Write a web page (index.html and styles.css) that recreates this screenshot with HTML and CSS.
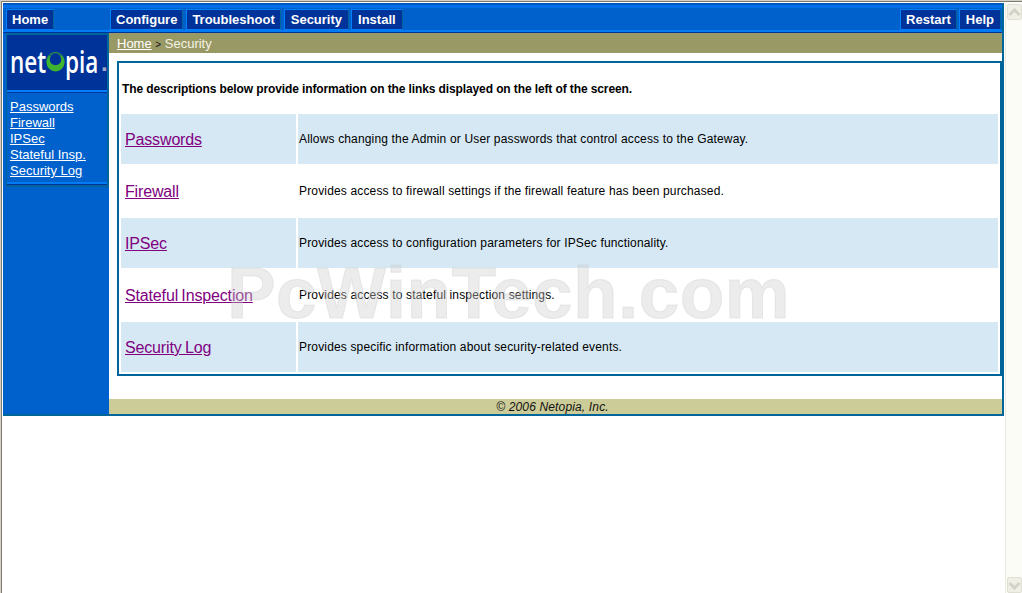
FILE: index.html
```html
<!DOCTYPE html>
<html lang="en">
<head>
<meta charset="utf-8">
<title>Netopia - Security</title>
<link rel="stylesheet" href="styles.css">
</head>
<body>
<div class="window">
  <div class="viewport">
    <div class="page">
      <nav class="topnav">
        <a class="btn btn-home">Home</a>
        <a class="btn">Configure</a>
        <a class="btn">Troubleshoot</a>
        <a class="btn btn-wide btn-tight">Security</a>
        <a class="btn btn-wide">Install</a>
        <a class="btn btn-restart">Restart</a>
        <a class="btn btn-wide">Help</a>
      </nav>
      <div class="columns">
        <aside class="sidebar">
          <div class="sidebox">
            <div class="logo">
              <span class="logo-text logo-net">net</span><svg class="logo-o" width="19" height="22" viewBox="0 0 19 22"><circle cx="9.5" cy="11.5" r="9" fill="#3fb52f"/><circle cx="9.5" cy="8.4" r="5.8" fill="#003399"/><circle cx="9.5" cy="10" r="8.6" fill="none" stroke="#3fb52f" stroke-width="0.8"/></svg><span class="logo-text logo-pia">pia</span><span class="logo-dot">.</span>
            </div>
            <ul class="sidelinks">
              <li><a href="#">Passwords</a></li>
              <li><a href="#">Firewall</a></li>
              <li><a href="#">IPSec</a></li>
              <li><a href="#">Stateful Insp.</a></li>
              <li><a href="#">Security Log</a></li>
            </ul>
          </div>
        </aside>
        <main class="main">
          <div class="crumb"><a href="#">Home</a> <span class="gt">&gt;</span> Security</div>
          <section class="box">
            <p class="intro">The descriptions below provide information on the links displayed on the left of the screen.</p>
            <div class="rows">
              <a class="name odd" href="#">Passwords</a><div class="desc odd">Allows changing the Admin or User passwords that control access to the Gateway.</div>
              <a class="name" href="#">Firewall</a><div class="desc">Provides access to firewall settings if the firewall feature has been purchased.</div>
              <a class="name odd" href="#">IPSec</a><div class="desc odd">Provides access to configuration parameters for IPSec functionality.</div>
              <a class="name" href="#">Stateful Inspection</a><div class="desc">Provides access to stateful inspection settings.</div>
              <a class="name odd" href="#">Security Log</a><div class="desc odd">Provides specific information about security-related events.</div>
            </div>
          </section>
          <footer class="foot">© 2006 Netopia, Inc.</footer>
        </main>
      </div>
      <div class="watermark">PcWinTech.com</div>
    </div>
    <div class="scrollbar">
      <div class="sb-btn"><svg width="13" height="9" viewBox="0 0 13 9"><path d="M1.5 7 L6.5 2 L11.5 7" fill="none" stroke="#d4d2c6" stroke-width="3"/></svg></div>
      <div class="sb-btn"><svg width="13" height="9" viewBox="0 0 13 9"><path d="M1.5 2 L6.5 7 L11.5 2" fill="none" stroke="#d4d2c6" stroke-width="3"/></svg></div>
    </div>
  </div>
</div>
</body>
</html>
```
FILE: styles.css
```css
* { box-sizing: border-box; }
html, body { margin: 0; padding: 0; height: 100%; overflow: hidden; background: #fff; }
body { font-family: "Liberation Sans", Arial, sans-serif; }
.window { height: 593px; border-top: 1px solid #d4d0c8; border-left: 1px solid #d4d0c8; }
.viewport { display: flex; align-items: flex-start; height: 592px; padding: 1px 0 0 1px; border-top: 1px solid #7f7b70; border-left: 1px solid #7f7b70; position: relative; }
.page { position: relative; width: 1001px; height: 413px; flex: none; border-right: 2px solid #006699; border-bottom: 2px solid #006699; background: #0060cc; }

.topnav { display: flex; height: 30px; padding: 6px 0 3px 3px; border-top: 2px solid #0058c0; background: #0060cc; box-shadow: inset 0 -1px 0 #003399, inset 0 -3px 0 #007af5; position: relative; }
.topnav::before { content: ""; position: absolute; left: 0; right: 0; top: 0; height: 3px; background: #0070ea; }
.btn { display: block; position: relative; height: 21px; margin-top: -2px; margin-right: 3px; padding: 0 5px; background: #003399; border: 1px solid #0080ff; border-right-color: #006699; color: #fff; font-size: 13px; font-weight: bold; line-height: 20px; white-space: nowrap; }
.btn-wide { padding: 0 6px; }
.btn-tight { margin-right: 2px; }
.btn-home { width: 48px; margin-right: 56px; }
.btn-restart { margin-left: auto; margin-right: 2px; }
.btn:last-child { margin-right: 1px; }

.columns { display: flex; height: 381px; }
.sidebar { width: 106px; flex: none; padding-left: 3px; background: #0060cc; }
.sidebox { height: 154px; border: 2px solid #006699; border-left-width: 1px; background: #0060cc; display: flex; flex-direction: column; }
.logo { height: 55px; flex: none; display: flex; align-items: flex-start; padding: 12px 0 0 3px; background: #003399; }
.logo-text { display: block; flex: none; font-family: "Open Sans", sans-serif; font-size: 30px; font-weight: 600; line-height: 30px; color: #fff; transform: scaleX(0.75); transform-origin: left top; }
.logo-net { width: 36px; }
.logo-pia { width: 34px; }
.logo-o { margin: 4px 0 0 0; flex: none; }
.logo-dot { font-size: 24px; font-weight: bold; line-height: 31px; color: #a7a9c8; margin-left: 2px; }
.sidelinks { list-style: none; margin: 0; padding: 7px 0 0 3px; flex: 1; border-top: 2px solid #0080ff; box-shadow: inset 0 1px 0 #003399, inset 0 -1px 0 #003399, inset 0 -3px 0 #007af5; }
.sidelinks li { height: 16px; line-height: 16px; font-size: 13px; }
.sidelinks a { color: #fff; }

.main { flex: 1; display: flex; flex-direction: column; background: #fff; }
.crumb { height: 20px; background: #999966; color: #f3f3e4; font-size: 13px; line-height: 22px; padding-left: 8px; }
.crumb a { color: #fff; }
.gt { color: #111; font-size: 10px; }
.box { height: 315px; margin: 8px 0 0 8px; border: 2px solid #006699; background: #fff; }
.intro { height: 50px; margin: 0; padding-left: 3px; font-size: 12px; font-weight: bold; letter-spacing: -0.11px; line-height: 52px; color: #000; }
.rows { display: grid; grid-template-columns: 175px 700px; grid-auto-rows: 50px; gap: 2px; margin: 1px 0 0 2px; }
.name, .desc { display: flex; align-items: center; }
.name { padding: 2px 0 0 4px; font-size: 16px; letter-spacing: -0.15px; word-spacing: -1px; color: #800080; text-decoration: underline; }
.desc { padding-left: 1px; font-size: 12px; letter-spacing: 0.16px; color: #000; }
.odd { background: #d6e8f4; }
.foot { height: 15px; margin-top: 23px; padding-right: 6px; background: #cccc99; color: #111; font-size: 12px; font-style: italic; letter-spacing: 0.15px; line-height: 16px; text-align: center; }

.watermark { position: absolute; left: 224px; top: 254px; font-size: 73px; font-weight: bold; letter-spacing: 0.4px; line-height: 72px; color: rgba(205, 205, 205, 0.38); -webkit-text-stroke: 1px rgba(205, 205, 205, 0.38); white-space: nowrap; pointer-events: none; }

.scrollbar { width: 18px; height: 590px; margin-left: 1px; flex: none; display: flex; flex-direction: column; justify-content: space-between; padding: 1px 0 0 1px; background: #fcfcf6; border-left: 1px solid #eceae0; }
.sb-btn { width: 15px; height: 16px; display: flex; align-items: center; justify-content: center; background: #efefe6; border: 1px solid #e0dfd4; border-radius: 2px; }
```
